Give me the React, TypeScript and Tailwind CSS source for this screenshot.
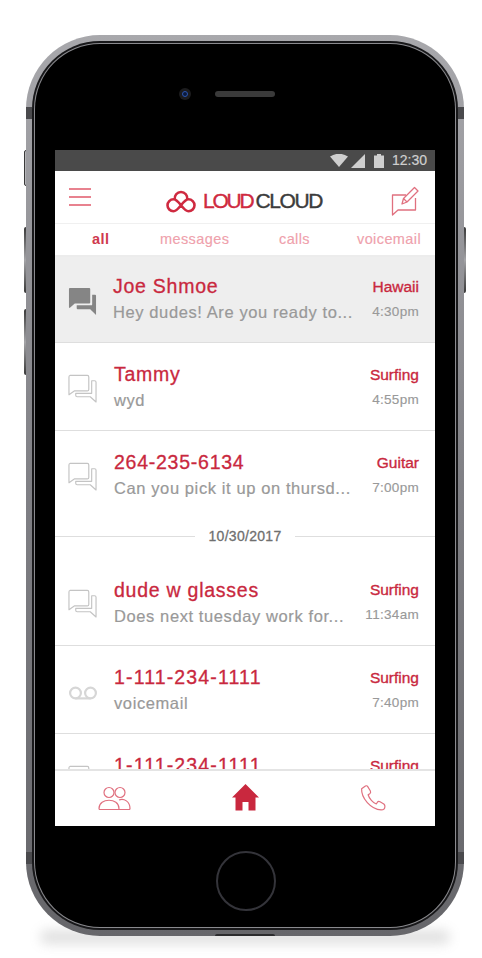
import { Fragment } from 'react';

type Row = { name: string; sub?: string; tag: string; time?: string; icon: 'filled' | 'chat' | 'voicemail'; active?: boolean; flat?: boolean; wide?: boolean; low?: boolean };

const before: Row[] = [
  { name: 'Joe Shmoe', sub: 'Hey dudes! Are you ready to...', tag: 'Hawaii', time: '4:30pm', icon: 'filled', active: true },
  { name: 'Tammy', sub: 'wyd', tag: 'Surfing', time: '4:55pm', icon: 'chat' },
  { name: '264-235-6134', sub: 'Can you pick it up on thursd...', tag: 'Guitar', time: '7:00pm', icon: 'chat', flat: true },
];

const after: Row[] = [
  { name: 'dude w glasses', sub: 'Does next tuesday work for...', tag: 'Surfing', time: '11:34am', icon: 'chat', low: true },
  { name: '1-111-234-1111', sub: 'voicemail', tag: 'Surfing', time: '7:40pm', icon: 'voicemail', wide: true },
  { name: '1-111-234-1111', tag: 'Surfing', icon: 'chat', wide: true },
];

function RowIcon({ icon }: { icon: Row['icon'] }) {
  if (icon === 'filled') {
    return (
      <svg width="29" height="29" viewBox="0 0 30 30" fill="#858585">
        <path d="M2 1h20a1 1 0 0 1 1 1v14a1 1 0 0 1-1 1H7l-5 4.500a.6.6 0 0 1-1-.5V2a1 1 0 0 1 1-1z" />
        <path d="M25 8h3a1 1 0 0 1 1 1v20l-6-6H10a1 1 0 0 1-1-1v-3h15a1 1 0 0 0 1-1z" />
      </svg>
    );
  }
  if (icon === 'voicemail') {
    return (
      <svg width="30" height="14" viewBox="0 0 30 14" fill="none" stroke="#d6d6d6" strokeWidth="2.200">
        <circle cx="7.500" cy="7" r="5.400" />
        <circle cx="22.500" cy="7" r="5.400" />
        <path d="M7.500 12.400h15" />
      </svg>
    );
  }
  return (
    <svg width="29" height="29" viewBox="0 0 30 30" fill="none" stroke="#c4c4c4" strokeWidth="1.200" strokeLinejoin="round">
      <path d="M2 1.500h18a1.500 1.500 0 0 1 1.500 1.500v13a1.500 1.500 0 0 1-1.500 1.500H6.500l-5.500 4V3A1.500 1.500 0 0 1 2 1.500z" />
      <path d="M24.500 7h3a1.500 1.500 0 0 1 1.500 1.500V29l-6-5.500H9.500A1.500 1.500 0 0 1 8 22v-2h16.500z" />
    </svg>
  );
}

function ListRow({ row }: { row: Row }) {
  const height = row.active ? 'h-[86px]' : 'h-[88px]';
  const border = row.flat ? '' : 'border-b border-[#dedede]';
  const iconTop = row.icon === 'voicemail' ? 'pt-[40px]' : row.active ? 'pt-[30px]' : 'pt-[31px]';
  const textTop = row.active ? 'pt-[16px]' : row.low ? 'pt-[19px] pl-[1px]' : 'pt-[18px] pl-[1px]';
  return (
    <div className={`flex shrink-0 ${height} ${border} ${row.active ? 'bg-[#eeeeee]' : 'bg-white'}`}>
      <div className={`flex w-[58px] shrink-0 justify-center pr-[3px] ${iconTop}`}>
        <RowIcon icon={row.icon} />
      </div>
      <div className={`min-w-0 flex-1 ${textTop}`}>
        <div className={`text-[19.5px] leading-[26px] text-[#c9283e] [-webkit-text-stroke:0.3px] ${row.wide ? 'tracking-[1.15px]' : 'tracking-[0.75px]'}`}>{row.name}</div>
        {row.sub && (
          <div className="mt-[1px] text-[16.5px] leading-[24px] tracking-[0.6px] whitespace-nowrap text-[#999999] [-webkit-text-stroke:0.2px]">{row.sub}</div>
        )}
      </div>
      <div className={`flex w-[90px] shrink-0 flex-col items-end pr-[16px] ${row.active ? 'pt-[20px]' : 'pt-[22px]'}`}>
        <div className="text-[15.5px] leading-[20px] text-[#c9283e] [-webkit-text-stroke:0.35px]">{row.tag}</div>
        {row.time && (
          <div className="mt-[5px] text-[13.5px] leading-[20px] tracking-[0.3px] text-[#999999] [-webkit-text-stroke:0.15px]">{row.time}</div>
        )}
      </div>
    </div>
  );
}

function Screen() {
  return (
    <div className="flex h-[676px] w-[380px] flex-col overflow-hidden bg-white font-['Liberation_Sans',Arial,sans-serif]">
      <div className="flex h-[21px] shrink-0 items-center justify-end gap-[3px] bg-[#4a4a4a] pr-[8px]">
        <svg width="18" height="13" viewBox="0 0 18 13" fill="#cfcfcf"><path d="M0 2.500Q9-3 18 2.500L9 13z" /></svg>
        <svg width="14" height="14" viewBox="0 0 14 14" fill="#cfcfcf"><path d="M14 0v14H0z" /></svg>
        <svg width="10" height="14" viewBox="0 0 10 14" fill="#cfcfcf" className="ml-[6px]"><path d="M3 0h4v1.500h3V14H0V1.500h3z" /></svg>
        <span className="ml-[5px] text-[14px] text-[#cfcfcf] [-webkit-text-stroke:0.2px]">12:30</span>
      </div>

      <div className="flex h-[53px] shrink-0 items-center justify-between border-b border-[#f0f0f0] pr-[16px] pl-[14px]">
        <div className="mb-[1px] flex w-[22px] flex-col gap-[6px]">
          <div className="h-[2px] bg-[#e8828f]" />
          <div className="h-[2px] bg-[#e8828f]" />
          <div className="h-[2px] bg-[#e8828f]" />
        </div>
        <div className="mt-[7px] ml-[6px] flex items-center">
          <svg width="30" height="24" viewBox="0 0 30 24" fill="none" stroke="#cf2a40" strokeWidth="2.600">
            <path d="M7.500 22.300a6 6 0 1 1 0-12c5.500 0 9.500 12 15 12a6 6 0 1 0 0-12c-5.500 0-9.500 12-15 12z" />
            <path d="M8.800 10.400a6.300 6.300 0 1 1 12.400 0" />
          </svg>
          <span className="ml-[7px] text-[21px] leading-none tracking-[-2.2px] text-[#cf2a40] [-webkit-text-stroke:0.4px]">LOUD</span>
          <span className="ml-[3px] text-[21px] leading-none tracking-[-1.4px] text-[#3c3c3c] [-webkit-text-stroke:0.4px]">CLOUD</span>
        </div>
        <svg width="28" height="30" viewBox="0 0 28 30" fill="none" stroke="#e0707f" strokeWidth="1.300" strokeLinejoin="round" className="mt-[7px]">
          <path d="M15 9H1.500v20l5.500-5h17.500V12" />
          <path d="M11 18l1.500-5.500L23.500 1.500l3.500 3.500L16 16z" />
          <path d="M12.500 12.500l3.500 3.500" />
        </svg>
      </div>

      <div className="flex h-[33px] shrink-0 items-center border-b-2 border-[#ececec] pr-[13px] pl-[37px] text-[14.5px] tracking-[0.4px] text-[#efa1ac] [-webkit-text-stroke:0.15px]">
        <span className="w-[68px] font-bold text-[#cf3a4e] [-webkit-text-stroke:0px]">all</span>
        <span className="w-[119px]">messages</span>
        <span className="w-[78px]">calls</span>
        <span>voicemail</span>
      </div>

      <div className="flex min-h-0 flex-1 flex-col overflow-hidden">
        {before.map((row, i) => (
          <Fragment key={i}>
            <ListRow row={row} />
          </Fragment>
        ))}
        <div className="flex h-[39px] shrink-0 items-center pb-[5px]">
          <div className="h-[1px] flex-1 bg-[#dedede]" />
          <span className="px-[13px] text-[14px] tracking-[0.3px] text-[#6f6f6f] [-webkit-text-stroke:0.3px]">10/30/2017</span>
          <div className="h-[1px] flex-1 bg-[#dedede]" />
        </div>
        {after.map((row, i) => (
          <Fragment key={i}>
            <ListRow row={row} />
          </Fragment>
        ))}
      </div>

      <div className="flex h-[57px] shrink-0 items-center justify-between border-t-2 border-[#e4e4e4] pr-[49px] pb-[2px] pl-[43px]">
        <svg width="33" height="24" viewBox="0 0 33 24" fill="none" stroke="#e0707f" strokeWidth="1.200">
          <circle cx="11" cy="6.500" r="5" />
          <circle cx="22" cy="6.500" r="5" />
          <path d="M1 22.500c0-11 20-11 20 0a1 1 0 0 1-1 1H2a1 1 0 0 1-1-1z" />
          <path d="M21 14c5-2 11 1.500 11 8.500a1 1 0 0 1-1 1H21" />
        </svg>
        <svg width="27" height="27" viewBox="0 0 27 27" fill="#c9283e" className="mb-[1px]">
          <path d="M13.500 0L27 13.500h-3.500V26.500H16.500V18h-6v8.500H3.500V13.500H0z" />
        </svg>
        <svg width="26" height="26" viewBox="0 0 24 24" fill="none" stroke="#e0707f" strokeWidth="1.100" strokeLinejoin="round">
          <path d="M5 1L1.500 3.500C1 12 10 22.500 19.500 23c2 0 3.500-1.500 3.500-3.500 0-1-.5-1.500-1-2l-3.500-2c-1-.5-2-.3-2.500.5l-1 1.500c-3-1-6.500-5-7.500-8.500l1.500-1c1-.7 1-1.500.6-2.500L7 1.300C6.500.6 5.700.5 5 1z" />
        </svg>
      </div>
    </div>
  );
}

export default function App() {
  return (
    <div className="relative h-[958px] w-[482px] overflow-hidden bg-white pt-[35px] pl-[26px]">
      {/* soft shadow under the phone */}
      <div className="absolute top-[930px] left-[40px] h-[14px] w-[410px] rounded-full bg-[#9a9a9a] opacity-30 blur-[6px]" />

      {/* side buttons */}
      <div className="absolute top-[150px] left-[24px] h-[36px] w-[4px] rounded-l-[2px] border border-[#3a3a3a] bg-[#b5b5b8]" />
      <div className="absolute top-[227px] left-[24px] h-[66px] w-[4px] rounded-l-[2px] bg-gradient-to-b from-[#3a3a3a] via-[#a5a5a8] to-[#3a3a3a]" />
      <div className="absolute top-[309px] left-[24px] h-[66px] w-[4px] rounded-l-[2px] bg-gradient-to-b from-[#3a3a3a] via-[#a5a5a8] to-[#3a3a3a]" />
      <div className="absolute top-[227px] left-[462px] h-[66px] w-[4px] rounded-r-[2px] bg-gradient-to-b from-[#3a3a3a] via-[#a5a5a8] to-[#3a3a3a]" />

      <div className="relative h-[901px] w-[438px] rounded-[74px] bg-gradient-to-b from-[#a8a8ac] via-[#808085] to-[#66666a] p-[6px]">
        <div className="h-full w-full rounded-[68px] bg-[#18181a] p-[2px]">
          <div className="h-full w-full rounded-[66px] bg-[#8a8a8e] p-[1px]">
            <div className="flex h-full w-full flex-col items-center rounded-[65px] bg-black pt-[106px]">
              <Screen />
            </div>
          </div>
        </div>
        {/* antenna bands on the metal edge */}
        <div className="absolute top-[72px] left-0 h-[12px] w-[6px] bg-[#4a4a4d]" />
        <div className="absolute top-[72px] right-0 h-[12px] w-[6px] bg-[#4a4a4d]" />
        <div className="absolute top-[817px] left-0 h-[12px] w-[6px] bg-[#4a4a4d]" />
        <div className="absolute top-[817px] right-0 h-[12px] w-[6px] bg-[#4a4a4d]" />
        {/* camera, speaker, home button sit on the black face */}
        <div className="absolute top-[53px] left-[153px] flex h-[12px] w-[12px] items-center justify-center rounded-full bg-[#1c1c1e]">
          <div className="h-[6px] w-[6px] rounded-full border-[1.5px] border-[#2c55b0] bg-[#0b1a3a]" />
        </div>
        <div className="absolute top-[56px] left-[189px] h-[6px] w-[60px] rounded-full bg-[#3a3a3a]" />
        <div className="absolute top-[816px] left-[190px] h-[60px] w-[60px] rounded-full border-[2px] border-[#34343a]" />
        {/* slit on the bottom edge */}
        <div className="absolute bottom-0 left-[189px] h-[2px] w-[60px] rounded-t-full bg-[#2c2c2e]" />
      </div>
    </div>
  );
}
